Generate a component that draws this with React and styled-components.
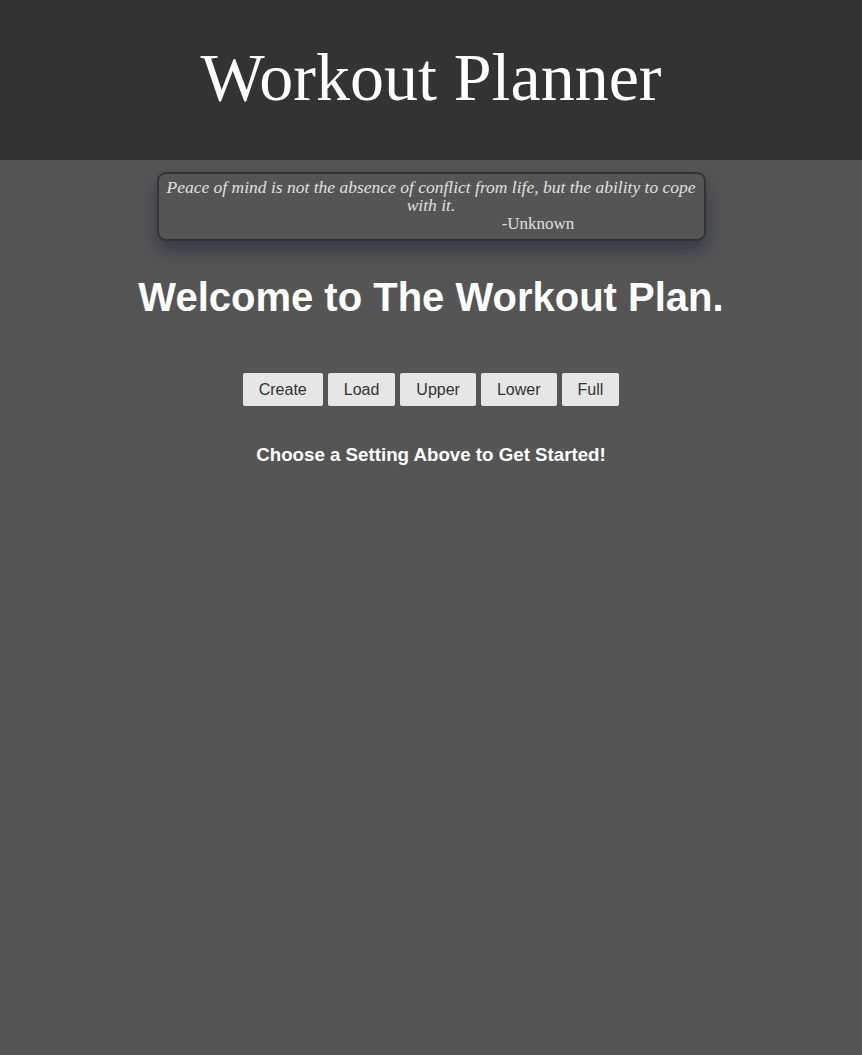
import React from "react";
import styled, { createGlobalStyle } from "styled-components";

const GlobalStyle = createGlobalStyle`
  html, body {
    margin: 0;
    padding: 0;
    background: #555555;
    min-height: 100%;
  }
  body {
    font-family: "Liberation Sans", Arial, sans-serif;
  }
`;

const Page = styled.div`
  min-height: 1055px;
  background: #555555;
  display: flex;
  flex-direction: column;
  align-items: center;
`;

const Header = styled.header`
  width: 100%;
  height: 160px;
  background: #333333;
  display: flex;
  align-items: center;
  justify-content: center;
`;

const Title = styled.h1`
  margin: 0 0 6px;
  font-family: "Liberation Serif", Georgia, serif;
  font-weight: 400;
  font-size: 68px;
  color: #ffffff;
`;

const Quote = styled.div`
  margin-top: 12px;
  width: 549px;
  box-sizing: border-box;
  padding: 4px 6px 6px;
  border: 2px solid #333333;
  border-radius: 9px;
  background: #555555;
  box-shadow: 0 10px 18px rgba(40, 50, 68, 0.75);
  font-family: "Liberation Serif", Georgia, serif;
  color: #e0e0e0;
  text-align: center;
`;

const QuoteText = styled.p`
  margin: 0;
  font-style: italic;
  font-size: 17.5px;
  line-height: 18px;
`;

const Author = styled.p`
  margin: 1px 0 0;
  padding-left: 214px;
  font-size: 17px;
  line-height: 18px;
`;

const Heading = styled.h2`
  margin: 33px 0 0;
  font-size: 40px;
  font-weight: 700;
  color: #ffffff;
  line-height: 46px;
`;

const ButtonRow = styled.div`
  margin-top: 53px;
  display: flex;
  gap: 5px;
`;

const Button = styled.button`
  height: 33px;
  padding: 0 16px;
  border: none;
  border-radius: 2px;
  background: #e6e6e6;
  color: #333333;
  font-family: "Liberation Sans", Arial, sans-serif;
  font-size: 16px;
  cursor: pointer;
`;

const Prompt = styled.h3`
  margin: 38px 0 0;
  font-size: 18.72px;
  font-weight: 700;
  color: #ffffff;
`;

const modes = ["Create", "Load", "Upper", "Lower", "Full"];

export default function App() {
  return (
    <>
      <GlobalStyle />
      <Page>
        <Header>
          <Title>Workout Planner</Title>
        </Header>
        <Quote>
          <QuoteText>
            Peace of mind is not the absence of conflict from life, but the
            ability to cope with it.
          </QuoteText>
          <Author>-Unknown</Author>
        </Quote>
        <Heading>Welcome to The Workout Plan.</Heading>
        <ButtonRow>
          {modes.map((m) => (
            <Button key={m}>{m}</Button>
          ))}
        </ButtonRow>
        <Prompt>Choose a Setting Above to Get Started!</Prompt>
      </Page>
    </>
  );
}
